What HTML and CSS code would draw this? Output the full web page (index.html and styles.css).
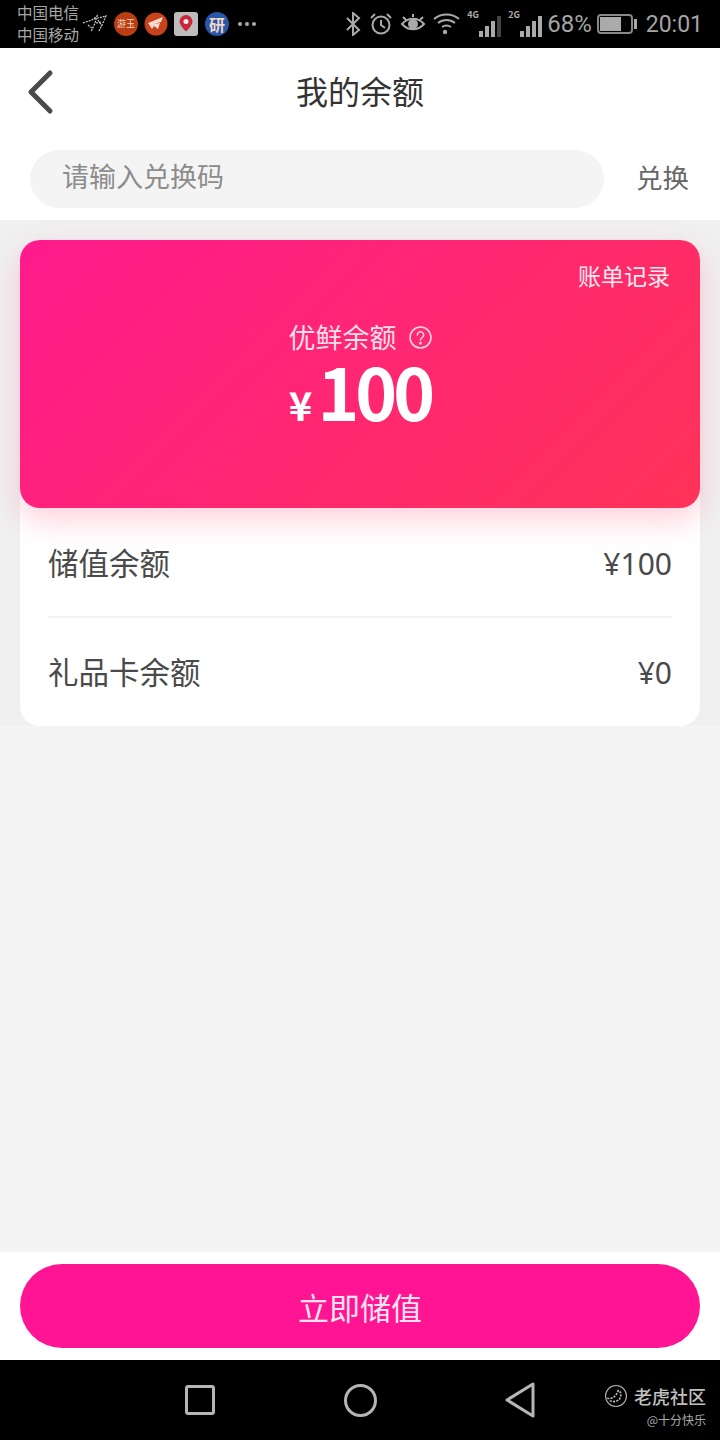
FILE: index.html
```html
<!DOCTYPE html>
<html lang="zh-CN">
<head>
  <meta charset="UTF-8" />
  <meta name="viewport" content="width=device-width, initial-scale=1.0" />
  <title>我的余额</title>
  <link rel="stylesheet" href="styles.css">
</head>
<body>
  <div class="phone">
    <div class="statusbar">
      <div class="status-left">
        <div class="carriers"><span>中国电信</span><span>中国移动</span></div>
        <svg class="notif-bird" width="26" height="20" viewBox="0 0 26 20" fill="none" stroke="#ccc" stroke-width="1.2" stroke-dasharray="2 1">
          <path d="M1 9l9-3 5-4 -2 7 -4 9"/><path d="M12 5l12-3 -4 9 -3 6"/><path d="M14 9l6-1"/><path d="M6 11l5 4M16 6l4 6"/>
        </svg>
        <span class="notif notif-red">游玉</span>
        <svg class="notif-svg" width="24" height="24" viewBox="0 0 24 24"><circle cx="12" cy="12" r="11.500" fill="#c6431c"/><path d="M4 11l15-6-2 5-7 2 6-1-2 6-4-3-2 3z" fill="#f3dccf"/></svg>
        <svg class="notif-svg" width="24" height="24" viewBox="0 0 24 24"><rect width="24" height="24" rx="3" fill="#bdbdbd"/><path d="M12 3a6.500 6.500 0 0 1 6.500 6.500c0 4-6.500 10-6.500 10s-6.500-6-6.500-10A6.500 6.500 0 0 1 12 3z" fill="#c8283a"/><circle cx="12" cy="9.500" r="2.500" fill="#eee"/></svg>
        <span class="notif notif-blue">研</span>
        <span class="dots"><i></i><i></i><i></i></span>
      </div>
      <div class="status-right">
        <svg class="ic-bt" width="18" height="24" viewBox="0 0 18 24" fill="none" stroke="#aaa" stroke-width="2"><path d="M3 6l12 12-6 5V1l6 5L3 18"/></svg>
        <svg class="ic-alarm" width="24" height="24" viewBox="0 0 24 24" fill="none" stroke="#aaa" stroke-width="2"><circle cx="12" cy="13" r="8.500"/><path d="M12 8v5l4 3M2 6l4-4M22 6l-4-4"/></svg>
        <svg class="ic-eye" width="26" height="22" viewBox="0 0 26 22" fill="none" stroke="#aaa" stroke-width="2"><path d="M2 11c6-7 16-7 22 0-6 7-16 7-22 0zM3 4l3 3M23 4l-3 3M13 1v3"/><circle cx="13" cy="11" r="4" fill="#aaa"/></svg>
        <svg class="ic-wifi" width="27" height="24" viewBox="0 0 27 24" fill="none" stroke="#aaa" stroke-width="2"><path d="M1 7c7-6 18-6 25 0M5 11c5-4 12-4 17 0M9 15c3-2 6-2 9 0"/><circle cx="12" cy="20" r="2.200" fill="#aaa" stroke="none"/></svg>
        <div class="signal"><span class="net">4G</span><span class="bars"><i class="b1"></i><i class="b2"></i><i class="b3"></i><i class="b4 dim"></i></span></div>
        <div class="signal"><span class="net">2G</span><span class="bars"><i class="b1"></i><i class="b2"></i><i class="b3"></i><i class="b4"></i></span></div>
        <span class="percent">68%</span>
        <div class="battery"><div class="battery-fill"></div></div>
        <span class="battery-tip"></span>
        <span class="time">20:01</span>
      </div>
    </div>

    <div class="page-top">
      <div class="navbar">
        <svg class="back" width="30" height="50" viewBox="0 0 30 50" fill="none" stroke="#4a4a4a" stroke-width="5" stroke-linecap="round" stroke-linejoin="round"><path d="M24 5L5 24l19 19"/></svg>
        <h1>我的余额</h1>
      </div>
      <div class="redeem">
        <input class="redeem-input" type="text" placeholder="请输入兑换码" />
        <span class="redeem-btn">兑换</span>
      </div>
    </div>

    <div class="balance-area">
      <div class="sheet">
        <div class="card">
          <div class="bill-link">账单记录</div>
          <div class="card-label">优鲜余额
            <svg width="23" height="23" viewBox="0 0 22 22" fill="none" stroke="#fbd5e0" stroke-width="1.500"><circle cx="11" cy="11" r="10"/><path d="M8 8.500a3 3 0 1 1 4.500 2.600c-1 .6-1.500 1-1.500 2.400" stroke-linecap="round"/><circle cx="11" cy="16.500" r=".6"/></svg>
          </div>
          <div class="card-amount"><span class="yen">¥</span>100</div>
        </div>
        <div class="row"><span>储值余额</span><span class="row-value">¥100</span></div>
        <div class="row"><span>礼品卡余额</span><span class="row-value">¥0</span></div>
      </div>
    </div>

    <div class="spacer"></div>

    <div class="footer">
      <button class="charge-btn">立即储值</button>
    </div>

    <div class="navkeys">
      <span class="key-square"></span>
      <span class="key-circle"></span>
      <svg class="key-back" width="32" height="36" viewBox="0 0 32 36" fill="none" stroke="#b5b5b5" stroke-width="3" stroke-linejoin="round"><path d="M28 2v32L2 18z"/></svg>
      <div class="watermark">
        <div class="wm-name">
          <svg width="22" height="22" viewBox="0 0 20 20" fill="none" stroke="#b5b5b5" stroke-width="1"><circle cx="10" cy="10" r="9.500"/><path d="M2 12c4 1 8-1 10-7 3 1 3 5 1 8-2 2-6 3-9 1" stroke-width="1.500" stroke-dasharray="2 1"/></svg>
          老虎社区
        </div>
        <div class="wm-user">@十分快乐</div>
      </div>
    </div>
  </div>
</body>
</html>
```

FILE: styles.css
```css
* {
  box-sizing: border-box;
  margin: 0;
  padding: 0;
}

body {
  background-color: #000;
  font-family: "Noto Sans CJK SC", "Noto Sans", sans-serif;
}

.phone {
  width: 720px;
  height: 1440px;
  display: flex;
  flex-direction: column;
  background-color: #f4f4f4;
  overflow: hidden;
}

/* status bar */
.statusbar {
  height: 48px;
  flex: none;
  background-color: #000;
  color: #aaa;
  display: flex;
  justify-content: space-between;
  align-items: center;
  padding: 0 17px;
}

.status-left, .status-right {
  display: flex;
  align-items: center;
}

.carriers {
  display: flex;
  flex-direction: column;
  font-size: 15.500px;
  line-height: 22px;
  color: #a8a8a8;
  margin-top: -3px;
}

.notif-bird {
  margin: 0 6px 0 3px;
}

.notif-svg {
  margin-left: 6px;
}

.notif {
  width: 24px;
  height: 24px;
  border-radius: 50%;
  color: #f0d8c8;
  font-size: 9px;
  line-height: 24px;
  text-align: center;
  white-space: nowrap;
  overflow: hidden;
}

.notif-red {
  background-color: #bb3d12;
}

.notif-blue {
  background-color: #2a56a8;
  font-size: 16px;
  font-weight: 700;
  margin-left: 7px;
}

.dots {
  display: flex;
  gap: 3px;
  margin-left: 9px;
}

.dots i {
  width: 4px;
  height: 4px;
  border-radius: 50%;
  background-color: #aaa;
}

.status-right {
  gap: 7px;
}

.signal {
  display: flex;
  align-items: flex-end;
  height: 26px;
  position: relative;
  width: 34px;
}

.net {
  position: absolute;
  left: 0;
  top: -1px;
  font-size: 9px;
  line-height: 10px;
  font-weight: 700;
  color: #aaa;
}

.bars {
  display: flex;
  align-items: flex-end;
  gap: 2px;
  margin-left: 12px;
}

.bars i {
  width: 4px;
  background-color: #aaa;
}

.bars .b1 { height: 6px; }
.bars .b2 { height: 11px; }
.bars .b3 { height: 16px; }
.bars .b4 { height: 21px; }
.bars .dim { background-color: #444; }

.percent {
  font-family: "Roboto", sans-serif;
  font-size: 24px;
  color: #a5a5a5;
  margin: 0 -2px;
}

.battery {
  width: 36px;
  height: 20px;
  border: 2px solid #888;
  border-radius: 4px;
  padding: 1px;
}

.battery-fill {
  width: 21px;
  height: 100%;
  background-color: #aaa;
}

.battery-tip {
  width: 3px;
  height: 10px;
  background-color: #aaa;
  margin-left: -6px;
}

.time {
  font-family: "Roboto", sans-serif;
  font-size: 23px;
  color: #a5a5a5;
  margin-left: 2px;
}

/* header and redeem code */
.page-top {
  flex: none;
  height: 172px;
  background-color: #fff;
}

.navbar {
  height: 84px;
  display: flex;
  align-items: center;
  justify-content: center;
  position: relative;
}

.back {
  position: absolute;
  left: 26px;
  top: 20px;
}

h1 {
  font-size: 32px;
  font-weight: 400;
  color: #333;
}

.redeem {
  display: flex;
  align-items: center;
  padding: 18px 31px 0 30px;
  justify-content: space-between;
}

.redeem-input {
  width: 574px;
  height: 58px;
  border: none;
  outline: none;
  border-radius: 29px;
  background-color: #f4f4f4;
  padding: 0 32px 8px;
  font-family: inherit;
  font-size: 27px;
}

.redeem-input::placeholder {
  color: #8c8c8c;
  opacity: 1;
}

.redeem-btn {
  font-size: 26.500px;
  color: #666;
  margin-top: -6px;
}

/* balance card */
.balance-area {
  flex: none;
  height: 506px;
  background-color: #f0f0f0;
  padding: 20px 20px 0;
}

.sheet {
  height: 486px;
  background-color: #fff;
  border-radius: 20px;
}

.card {
  height: 268px;
  border-radius: 20px;
  background: linear-gradient(135deg, #ff1a8c 0%, #ff3358 100%);
  box-shadow: 0 12px 30px rgba(255, 40, 100, 0.22);
  color: #fff;
  padding: 18px 30px 0;
  margin-bottom: 2px;
  display: flex;
  flex-direction: column;
  align-items: center;
}

.bill-link {
  align-self: flex-end;
  font-size: 23px;
  line-height: 34px;
  color: #fdeaf0;
}

.card-label {
  margin-top: 26px;
  font-size: 27px;
  line-height: 38px;
  color: #fbdfe8;
  display: flex;
  align-items: center;
  gap: 12px;
}

.card-amount {
  font-size: 71px;
  font-weight: 700;
  line-height: 68px;
  letter-spacing: -4px;
}

.yen {
  font-size: 40px;
  letter-spacing: 0;
  margin-right: 5px;
}

.row {
  height: 108px;
  margin: 0 28px;
  display: flex;
  justify-content: space-between;
  align-items: center;
  padding-bottom: 2px;
  font-size: 30.500px;
  color: #4a4a4a;
  border-bottom: 2px solid #f4f4f4;
}

.row:last-child {
  border-bottom: none;
}

.row-value {
  font-family: "Noto Sans", sans-serif;
  font-size: 30px;
  margin-top: 3px;
}

.spacer {
  flex: 1;
}

/* bottom button */
.footer {
  flex: none;
  height: 108px;
  background-color: #fff;
  padding: 12px 20px;
}

.charge-btn {
  width: 100%;
  height: 84px;
  border: none;
  border-radius: 42px;
  background-color: #ff1493;
  color: #fbe3ee;
  font-family: inherit;
  font-size: 31px;
}

/* android keys */
.navkeys {
  flex: none;
  height: 80px;
  background-color: #000;
  position: relative;
  display: flex;
  align-items: center;
  padding-left: 185px;
}

.key-square {
  width: 30px;
  height: 30px;
  border: 3px solid #b5b5b5;
  border-radius: 3px;
}

.key-circle {
  width: 33px;
  height: 33px;
  border: 3px solid #b5b5b5;
  border-radius: 50%;
  margin-left: 129px;
}

.key-back {
  margin-left: 128px;
}

.watermark {
  position: absolute;
  right: 14px;
  top: 23px;
  text-align: right;
  color: #c0c0c0;
}

.wm-name {
  display: flex;
  align-items: center;
  gap: 7px;
  font-size: 18px;
  line-height: 26px;
  font-weight: 500;
}

.wm-user {
  font-size: 12px;
  line-height: 18px;
  color: #aaa;
  margin-top: 2px;
}
```
